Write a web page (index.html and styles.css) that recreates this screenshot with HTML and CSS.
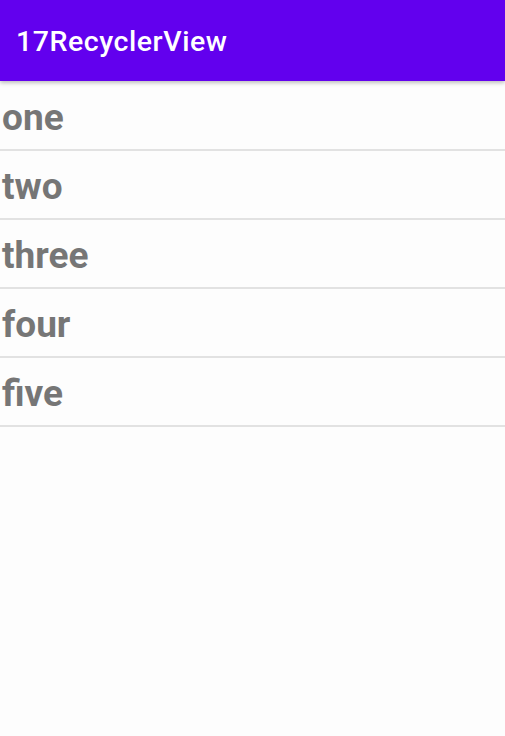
FILE: index.html
```html
<!DOCTYPE html>
<html>
<head>
<meta charset="utf-8">
<link rel="stylesheet" href="styles.css">
</head>
<body>
<header class="appbar"><span class="title">17RecyclerView</span></header>
<main class="list">
  <div class="row"><span class="label">one</span></div>
  <div class="row"><span class="label">two</span></div>
  <div class="row"><span class="label">three</span></div>
  <div class="row"><span class="label">four</span></div>
  <div class="row"><span class="label">five</span></div>
</main>
</body>
</html>
```
FILE: styles.css
```css
html, body {
  margin: 0;
  padding: 0;
  background: #fdfdfd;
  font-family: Roboto, "Noto Sans", sans-serif;
}
.appbar {
  height: 81px;
  box-sizing: border-box;
  background: #6200ee;
  display: flex;
  align-items: center;
  padding: 0 16px;
  box-shadow: 0 2px 4px rgba(0,0,0,0.25);
  position: relative;
  z-index: 1;
}
.title {
  color: #ffffff;
  font-size: 28.5px;
  font-weight: 500;
  letter-spacing: 0.55px;
  margin-top: 2px;
}
.list {
  display: flex;
  flex-direction: column;
  padding-top: 1px;
}
.row {
  height: 69px;
  box-sizing: border-box;
  border-bottom: 2px solid #e2e2e2;
  display: flex;
  align-items: center;
  padding-left: 2px;
}
.label {
  color: #767676;
  font-size: 37px;
  font-weight: 700;
  margin-top: 3px;
}
```
